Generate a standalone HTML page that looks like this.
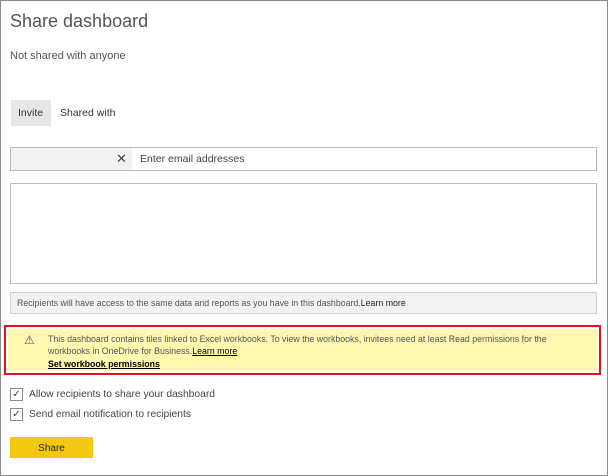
<!DOCTYPE html>
<html><head><style>
body{margin:0;width:608px;height:476px;overflow:hidden;background:#fff;font-family:"Liberation Sans",sans-serif;color:#333;}
.frame{position:absolute;left:0;top:0;width:606px;height:474px;border:1px solid #8a8a8a;}
.a{position:absolute;}
</style></head><body>
<div class="frame"></div>
<div class="a" style="left:10px;top:11px;font-size:18px;color:#555;">Share dashboard</div>
<div class="a" style="left:10px;top:50px;font-size:11px;color:#555;">Not shared with anyone</div>
<div class="a" style="left:11px;top:100px;width:40px;height:26px;background:#e6e6e6;"></div>
<div class="a" style="left:18px;top:107px;font-size:10.5px;color:#333;">Invite</div>
<div class="a" style="left:60px;top:107px;font-size:10.5px;color:#333;">Shared with</div>
<div class="a" style="left:10px;top:147px;width:585px;height:22px;border:1px solid #bbb;"></div>
<div class="a" style="left:11px;top:148px;width:121px;height:22px;background:#f2f2f2;"></div>
<div class="a" style="left:116px;top:151px;font-size:13px;color:#444;">✕</div>
<div class="a" style="left:140px;top:153px;font-size:10.5px;color:#444;">Enter email addresses</div>
<div class="a" style="left:10px;top:183px;width:585px;height:99px;border:1px solid #bbb;"></div>
<div class="a" style="left:10px;top:292px;width:585px;height:20px;border:1px solid #d0d0d0;background:#f2f2f2;"></div>
<div class="a" style="left:17px;top:298px;font-size:8.8px;color:#555;">Recipients will have access to the same data and reports as you have in this dashboard.<span style="color:#222">Learn more</span></div>
<div class="a" style="left:4px;top:325px;width:593px;height:46px;border:2px solid #e0141e;"></div>
<div class="a" style="left:8px;top:329px;width:589px;height:42px;background:#fef8b0;"></div>
<div class="a" style="left:24px;top:333px;font-size:12px;color:#555;">⚠</div>
<div class="a" style="left:48px;top:333px;font-size:8.8px;color:#555;line-height:12px;">This dashboard contains tiles linked to Excel workbooks. To view the workbooks, invitees need at least Read permissions for the<br>workbooks in OneDrive for Business.<span style="color:#000;text-decoration:underline">Learn more</span></div>
<div class="a" style="left:48px;top:359px;font-size:8.8px;color:#000;font-weight:bold;text-decoration:underline;">Set workbook permissions</div>
<div class="a" style="left:10px;top:388px;width:11px;height:11px;border:1px solid #888;font-size:10px;line-height:11px;text-align:center;color:#444;">✓</div>
<div class="a" style="left:29px;top:389px;font-size:10.3px;color:#444;">Allow recipients to share your dashboard</div>
<div class="a" style="left:10px;top:408px;width:11px;height:11px;border:1px solid #888;font-size:10px;line-height:11px;text-align:center;color:#444;">✓</div>
<div class="a" style="left:29px;top:409px;font-size:10.3px;color:#444;">Send email notification to recipients</div>
<div class="a" style="left:10px;top:437px;width:83px;height:21px;background:#f2c811;font-size:10px;line-height:23px;text-align:center;color:#222;">Share</div>
</body></html>
